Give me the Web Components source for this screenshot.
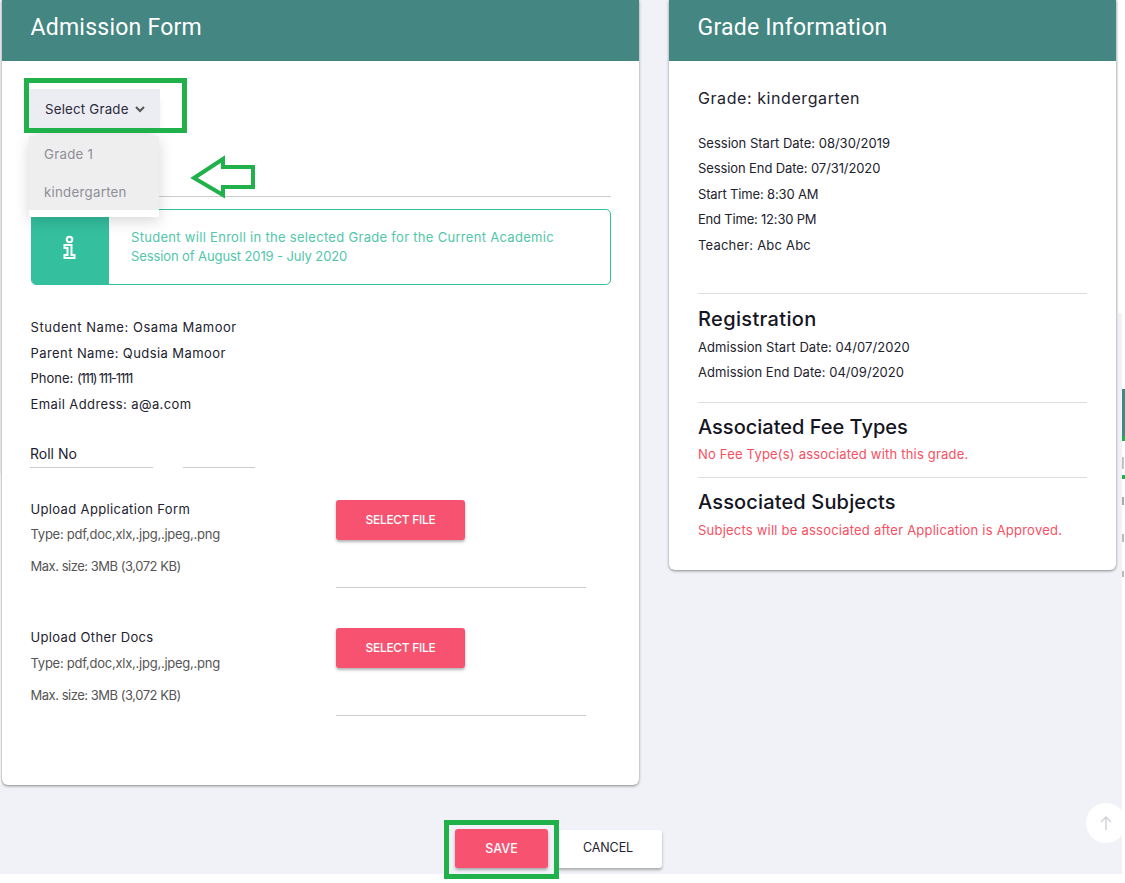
<!DOCTYPE html>
<html><head><meta charset="utf-8"><style>
html,body{margin:0;padding:0;background:#fff}
body{width:1125px;height:883px;overflow:hidden;position:relative;font-family:"Inter","Open Sans",sans-serif;color:#1d1d2b}
</style></head><body>
<app-page>
  <app-card slot="left" title-text="Admission Form" style="width:637px;height:785px">
    <grade-select></grade-select>
    <info-alert><span style="letter-spacing:.3px">Student will Enroll in the selected Grade for the Current Academic</span><br><span style="letter-spacing:-.1px">Session of August 2019 - July 2020</span></info-alert>
    <text-lines style="margin-top:30px">
      <div style="letter-spacing:.54px">Student Name: Osama Mamoor</div><div style="letter-spacing:.42px">Parent Name: Qudsia Mamoor</div><div>Phone: <span style="letter-spacing:-1.2px">(111) 111-1111</span></div><div style="letter-spacing:.4px">Email Address: a@a.com</div>
    </text-lines>
    <roll-row></roll-row>
    <file-upload label="Upload Application Form" gap="3" style="margin-top:32px"></file-upload>
    <file-upload label="Upload Other Docs" gap="4" style="margin-top:40px"></file-upload>
  </app-card>
  <app-card slot="right" title-text="Grade Information" style="width:447px;height:570px">
    <grade-info></grade-info>
  </app-card>
  <form-actions slot="actions"></form-actions>
</app-page>
<edge-clip></edge-clip>
<scroll-top></scroll-top>
<green-marks></green-marks>
<script>
function def(name,html,init){customElements.define(name,class extends HTMLElement{constructor(){super();const r=this.attachShadow({mode:'open'});r.innerHTML=typeof html==='function'?html(this):html;}connectedCallback(){if(init)init(this)}})}
def('app-page',`<style>:host{display:block;width:1122px;height:874px;background:#f1f2f7;box-sizing:border-box;padding:0 0 0 2px;position:relative}
.cols{display:flex;gap:30px;align-items:flex-start}.act{display:flex;justify-content:flex-start;padding:44px 0 0 453px}</style>
<div class="cols"><slot name="left"></slot><slot name="right"></slot></div><div class="act"><slot name="actions"></slot></div>`);
def('app-card',`<style>:host{display:block;background:#fff;border-radius:0 0 6px 6px;box-shadow:0 1px 3px rgba(0,0,0,.45);box-sizing:border-box;overflow:hidden;flex:none;position:relative;z-index:1}
h2{margin:0;height:61px;background:#448782;color:#fff;font:400 23px/55px Roboto,sans-serif;padding-left:28.5px;letter-spacing:.24px}
</style><h2></h2><slot></slot>`,el=>{el.shadowRoot.querySelector('h2').textContent=el.getAttribute('title-text')});
def('grade-select',`<style>:host{display:block;height:148px;position:relative}
.line{position:absolute;left:28px;top:135px;width:581px;height:1px;background:#ccc}
.btn{position:absolute;left:27px;top:28px;width:131px;height:40px;background:#ecedf2;font:400 13.3px/41px Inter,sans-serif;color:#2b2b3a;padding:1px 0 0 16px;box-sizing:border-box;box-shadow:0 6px 10px -4px rgba(0,0,0,.18);display:flex;align-items:center;gap:6px;letter-spacing:.2px}
.menu{position:absolute;left:27px;top:75px;width:130px;height:81px;background:#fff;box-shadow:0 4px 14px rgba(0,0,0,.16);z-index:3}
.it{height:37px;background:#eeeeef;font:400 13.3px/37px Inter,sans-serif;color:#8e8e96;padding-left:15px;letter-spacing:.25px}
.it+.it{line-height:38px}
</style><div class="line"></div><div class="btn">Select Grade <svg width="10" height="7" viewBox="0 0 10 7"><path d="M1 1l4 4 4-4" fill="none" stroke="#555" stroke-width="2"/></svg></div>
<div class="menu"><div class="it">Grade 1</div><div class="it">kindergarten</div></div>`);
def('info-alert',`<style>:host{display:flex;margin-left:29px;width:580px;height:76px;border:1px solid #34bf9f;border-radius:5px;box-sizing:border-box;overflow:hidden;position:relative;z-index:0}
.ic{width:77px;background:#34bf9f;display:flex;align-items:center;justify-content:center;flex:none}
.ic svg{margin-right:2px}
.tx{font:400 13px/19px Inter,sans-serif;color:#52c6aa;padding:18px 20px 0 22px;white-space:nowrap}
</style><div class="ic"><svg width="13" height="24" viewBox="0 0 13 24"><circle cx="6.5" cy="4.5" r="2.8" fill="none" stroke="#fff" stroke-width="2"/><path d="M1.5 10h7v10h3v3H1.5v-3h3v-7h-3z" fill="none" stroke="#fff" stroke-width="2"/></svg></div><div class="tx"><slot></slot></div>`);
def('text-lines',`<style>:host{display:block;margin-left:28.5px;font:400 13px/25.5px Inter,sans-serif;color:#22222e}</style><slot></slot>`);
def('roll-row',`<style>:host{display:flex;gap:30px;margin:18px 0 0 28px}.a{width:123px;height:32px;border-bottom:1px solid #ccc;font:400 14px/37px Inter,sans-serif;color:#22222e;overflow:hidden}.b{width:72px;border-bottom:1px solid #ccc}</style><div class="a">Roll No</div><div class="b"></div>`);
def('file-upload',el=>`<style>:host{display:flex;margin-left:28.5px}
.l{width:305.5px;font:400 13px/25px Inter,sans-serif;color:#555}.t{color:#22222e;line-height:20px;margin-top:-1px;letter-spacing:.35px}
.y{letter-spacing:-.25px}.m{margin-top:7px;letter-spacing:-.48px}
.r{width:250px;height:87px;border-bottom:1px solid #ccc}
button{width:129px;height:40px;border:0;border-radius:3px;background:#f75270;color:#fff;font:500 12px/40px Inter,sans-serif;letter-spacing:-.3px;box-shadow:0 2px 3px rgba(0,0,0,.3);padding:0;display:block}
</style><div class="l"><div class="t">${el.getAttribute('label')}</div><div class="y" style="margin-top:${el.getAttribute('gap')}px">Type: pdf,doc,xlx,.jpg,.jpeg,.png</div><div class="m">Max. size: 3MB (3,072 KB)</div></div><div class="r"><button>SELECT FILE</button></div>`);
def('grade-info',`<style>:host{display:block;padding:0 29px;color:#22222e;font:400 13px/25.5px Inter,sans-serif}
.g{font-size:16px;line-height:24px;margin-top:25px;margin-bottom:20.5px;letter-spacing:.58px}h3{margin:0;font:500 20px/28px Inter,sans-serif;color:#15151f}
hr{border:0;border-top:1px solid #ddd;margin:0}.red{color:#f8505f}
</style><div class="g">Grade: kindergarten</div>
<div>Session Start Date: 08/30/2019</div><div style="letter-spacing:-.1px">Session End Date: 07/31/2020</div><div style="letter-spacing:-.15px">Start Time: 8:30 AM</div><div style="letter-spacing:-.2px">End Time: 12:30 PM</div><div style="letter-spacing:.2px">Teacher: Abc Abc</div>
<hr style="margin-top:34.5px"><h3 style="margin-top:11px;letter-spacing:.35px">Registration</h3><div style="margin-top:2px;letter-spacing:.06px">Admission Start Date: 04/07/2020</div><div style="letter-spacing:.04px">Admission End Date: 04/09/2020</div>
<hr style="margin-top:16px"><h3 style="margin-top:10px">Associated Fee Types</h3><div class="red" style="line-height:24px;margin-top:1px;letter-spacing:.2px">No Fee Type(s) associated with this grade.</div>
<hr style="margin-top:11px"><h3 style="margin-top:10px;letter-spacing:.15px">Associated Subjects</h3><div class="red" style="margin-top:2px;letter-spacing:.22px">Subjects will be associated after Application is Approved.</div>`);
def('form-actions',`<style>:host{display:flex;gap:8px}
button{height:39px;border:0;border-radius:3px;font:500 12.5px/39px Inter,sans-serif;padding:0;box-shadow:0 2px 3px rgba(0,0,0,.3)}
.s{width:93px;background:#f75270;color:#fff}.c{width:106px;background:#fff;color:#22222e;font-weight:400;margin-top:1px;height:38px;line-height:36px;letter-spacing:-.1px;padding:0 2px 2px 0}</style><button class="s">SAVE</button><button class="c">CANCEL</button>`);
def('edge-clip',`<style>:host{position:absolute;left:0;top:0;width:1125px;height:883px;pointer-events:none}
i{position:absolute;display:block}</style>
<i style="left:0;top:473px;width:1px;height:312px;background:#fff"></i>
<i style="left:1118px;top:0;width:7px;height:313px;background:#fff"></i>
<i style="left:1122px;top:389px;width:3px;height:47px;background:#448782"></i><i style="left:1122px;top:436px;width:3px;height:5px;background:#21b14b"></i><i style="left:1122px;top:475px;width:3px;height:4px;background:#21b14b"></i>
<i style="left:1122px;top:457px;height:12px;background:#bbb;width:1px"></i><i style="left:1123px;top:457px;height:12px;background:#ccc;width:1px"></i><i style="left:1122px;top:497px;height:8px;background:#aaa;width:2px"></i><i style="left:1122px;top:534px;height:8px;background:#bbb;width:2px"></i><i style="left:1122px;top:571px;height:6px;background:#bbb;width:2px"></i>`);
def('scroll-top',`<style>:host{position:absolute;left:1086px;top:803px;width:40px;height:40px;border-radius:50%;background:#fff;display:flex;align-items:center;justify-content:center}</style>
<svg width="12" height="16" viewBox="0 0 12 16"><path d="M6 15V2M1 7l5-5 5 5" fill="none" stroke="#d2d3dc" stroke-width="1.5"/></svg>`);
def('green-marks',`<style>:host{position:absolute;left:0;top:0;width:1125px;height:883px;pointer-events:none;z-index:5}
i{position:absolute;display:block;border:5px solid #21b14b;box-sizing:border-box}svg{position:absolute;left:190px;top:155px}</style>
<i style="left:24px;top:78px;width:163px;height:55px"></i><i style="left:444px;top:820px;width:115px;height:59px"></i>
<svg width="68" height="44" viewBox="0 0 68 44"><path d="M4 23L33 4v8h30v20H33v8z" fill="none" stroke="#21b14b" stroke-width="4"/></svg>`);
</script>
</body></html>
